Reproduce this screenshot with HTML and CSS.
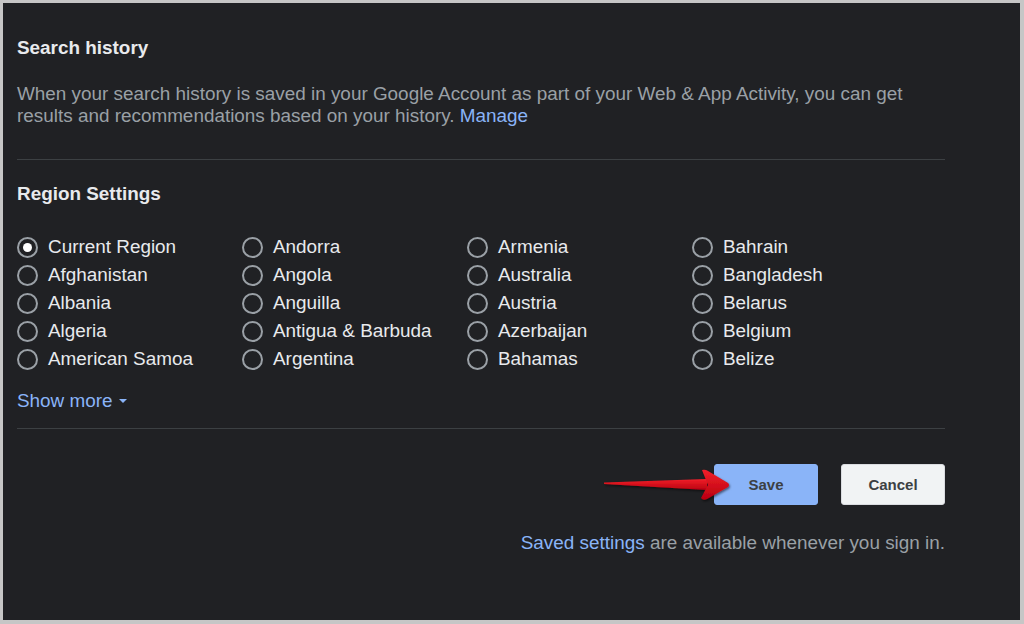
FILE: index.html
```html
<!DOCTYPE html>
<html lang="en">
<head>
    <meta charset="UTF-8">
    <meta name="viewport" content="width=device-width, initial-scale=1.0">
    <title>Search settings</title>
    <link rel="stylesheet" href="styles.css">
</head>
<body>
    <div class="panel">
        <!-- Search history -->
        <section class="block">
            <h2>Search history</h2>
            <p class="desc">When your search history is saved in your Google Account as part of your Web &amp; App Activity, you can get results and recommendations based on your history. <a href="#">Manage</a></p>
        </section>

        <hr class="divider">

        <!-- Region settings -->
        <section class="block">
            <h2 class="region-title">Region Settings</h2>
            <div class="regions">
                <label class="region"><input type="radio" name="region" checked> Current Region</label>
                <label class="region"><input type="radio" name="region"> Afghanistan</label>
                <label class="region"><input type="radio" name="region"> Albania</label>
                <label class="region"><input type="radio" name="region"> Algeria</label>
                <label class="region"><input type="radio" name="region"> American Samoa</label>
                <label class="region"><input type="radio" name="region"> Andorra</label>
                <label class="region"><input type="radio" name="region"> Angola</label>
                <label class="region"><input type="radio" name="region"> Anguilla</label>
                <label class="region"><input type="radio" name="region"> Antigua &amp; Barbuda</label>
                <label class="region"><input type="radio" name="region"> Argentina</label>
                <label class="region"><input type="radio" name="region"> Armenia</label>
                <label class="region"><input type="radio" name="region"> Australia</label>
                <label class="region"><input type="radio" name="region"> Austria</label>
                <label class="region"><input type="radio" name="region"> Azerbaijan</label>
                <label class="region"><input type="radio" name="region"> Bahamas</label>
                <label class="region"><input type="radio" name="region"> Bahrain</label>
                <label class="region"><input type="radio" name="region"> Bangladesh</label>
                <label class="region"><input type="radio" name="region"> Belarus</label>
                <label class="region"><input type="radio" name="region"> Belgium</label>
                <label class="region"><input type="radio" name="region"> Belize</label>
            </div>
            <a href="#" class="show-more">Show more<span class="caret"></span></a>
        </section>

        <hr class="divider divider-low">

        <!-- Actions -->
        <div class="actions">
            <svg class="pointer" width="132" height="40" viewBox="600 464 132 40" aria-hidden="true">
                <defs>
                    <linearGradient id="redFill" x1="0" y1="0" x2="0" y2="1">
                        <stop offset="0" stop-color="#f2202a"/>
                        <stop offset="1" stop-color="#b8000f"/>
                    </linearGradient>
                    <filter id="soft" x="-10%" y="-30%" width="120%" height="160%">
                        <feDropShadow dx="1" dy="1.5" stdDeviation="1.2" flood-color="#000" flood-opacity="0.55"/>
                    </filter>
                </defs>
                <g filter="url(#soft)" fill="url(#redFill)">
                    <path d="M603,482.5 L706,479 L706,490 L603,484 Z"/>
                    <path d="M701,470 Q704,469 707,471 L727,483 Q729,485 727,487 L706,499 Q702,501 700,498 L707,485 Z"/>
                </g>
            </svg>
            <button class="btn btn-save">Save</button>
            <button class="btn btn-cancel">Cancel</button>
        </div>

        <p class="note"><a href="#">Saved settings</a> are available whenever you sign in.</p>
    </div>
</body>
</html>
```

FILE: styles.css
```css
* {
    margin: 0;
    padding: 0;
    box-sizing: border-box;
}

body {
    background: #c6c6c6;
    font-family: 'Liberation Sans', Arial, sans-serif;
    font-size: 18.9px;
    line-height: 22px;
    overflow: hidden;
}

a {
    color: #8ab4f8;
    text-decoration: none;
}

.panel {
    margin: 3px 4px 4px 3px;
    height: 617px;
    background: #202124;
    padding: 34px 0 0 14px;
}

.block,
.divider,
.actions,
.note {
    width: 928px;
}

.block h2 {
    font-size: 18.9px;
    font-weight: bold;
    color: #e8eaed;
    line-height: 22px;
}

.desc {
    margin-top: 24px;
    color: #9aa0a6;
}

.divider {
    border: none;
    height: 1px;
    background: #3c4043;
    margin: 32px 0 23px;
}

/* Region grid */
.regions {
    display: grid;
    grid-template-columns: repeat(4, 225px);
    grid-template-rows: repeat(5, 28px);
    grid-auto-flow: column;
    margin-top: 28px;
}

.region {
    display: flex;
    align-items: center;
    gap: 10px;
    color: #e8eaed;
    cursor: pointer;
}

.region input {
    appearance: none;
    -webkit-appearance: none;
    width: 21px;
    height: 21px;
    border: 2px solid #9aa0a6;
    border-radius: 50%;
    display: grid;
    place-items: center;
    margin-left: 0;
}

.region input:checked::after {
    content: "";
    width: 9px;
    height: 9px;
    border-radius: 50%;
    background: #ffffff;
}

.show-more {
    display: inline-block;
    margin-top: 17px;
}

.caret {
    display: inline-block;
    vertical-align: middle;
    margin: -2px 0 0 6px;
    border-left: 4px solid transparent;
    border-right: 4px solid transparent;
    border-top: 4px solid #8ab4f8;
}

.divider-low {
    margin: 16px 0 35px;
}

/* Buttons */
.actions {
    position: relative;
    display: flex;
    justify-content: flex-end;
    gap: 23px;
}

.btn {
    width: 104px;
    height: 41px;
    border-radius: 3px;
    font-family: 'Liberation Sans', Arial, sans-serif;
    font-size: 15px;
    font-weight: bold;
    color: #3c4043;
    cursor: pointer;
}

.btn-save {
    background: #8ab4f8;
    border: 1px solid #8ab4f8;
}

.btn-cancel {
    background: #f1f3f4;
    border: 1px solid #dadce0;
}

.pointer {
    position: absolute;
    right: 212px;
    top: 0;
}

.note {
    margin-top: 27px;
    text-align: right;
    color: #9aa0a6;
}
```
